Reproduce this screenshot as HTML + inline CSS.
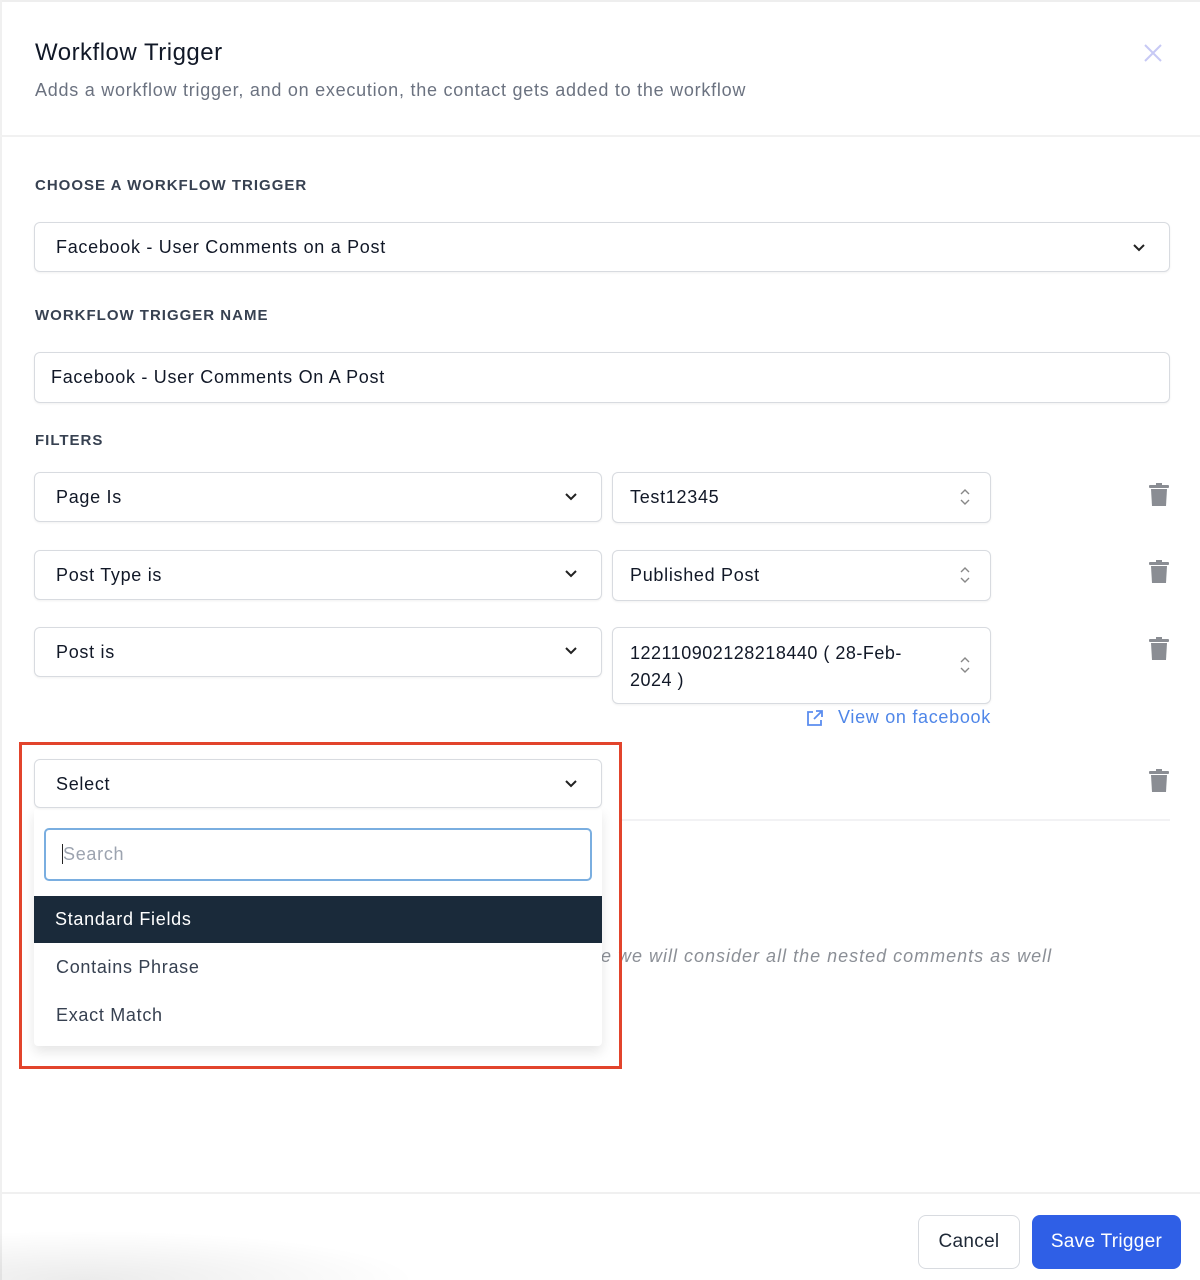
<!DOCTYPE html>
<html><head><meta charset="utf-8"><style>
*{box-sizing:border-box;margin:0;padding:0}
body{width:1200px;height:1280px;background:#fff;font-family:"Liberation Sans",sans-serif;color:#1f2937;position:relative;overflow:hidden;letter-spacing:0.7px}
.abs{position:absolute}
.box{position:absolute;border:1px solid #d8dbe0;border-radius:6px;background:#fff;box-shadow:0 1px 2px rgba(0,0,0,.06);font-size:18px;color:#111827}
.lbl{position:absolute;left:35px;font-size:15px;font-weight:bold;letter-spacing:1px;color:#374151}
.chev{position:absolute;width:16px;height:16px}
.trash{position:absolute;left:1148px;width:22px;height:24px}
</style></head><body>
<div class="abs" style="left:0;top:0;width:1200px;height:2px;background:#eee"></div>
<div class="abs" style="left:0;top:0;width:2px;height:1280px;background:#f0f0f0"></div>
<div class="abs" style="left:35px;top:39px;font-size:24px;color:#111827;letter-spacing:0.5px">Workflow Trigger</div>
<div class="abs" style="left:35px;top:80px;font-size:18px;color:#6b7280;letter-spacing:0.75px">Adds a workflow trigger, and on execution, the contact gets added to the workflow</div>
<svg class="abs" style="left:1143px;top:43px" width="20" height="20" viewBox="0 0 20 20"><path d="M2 2L18 18M18 2L2 18" stroke="#c7c9f5" stroke-width="2"/></svg>
<div class="abs" style="left:0;top:135px;width:1200px;height:2px;background:#f1f1f1"></div>

<div class="lbl" style="top:177px">CHOOSE A WORKFLOW TRIGGER</div>
<div class="box" style="left:34px;top:222px;width:1136px;height:50px;padding:14px 21px">Facebook - User Comments on a Post</div>
<svg class="chev" style="left:1131px;top:240px" viewBox="0 0 16 16"><path d="M3 5l5 5 5-5" fill="none" stroke="#222" stroke-width="2"/></svg>

<div class="lbl" style="top:307px">WORKFLOW TRIGGER NAME</div>
<div class="box" style="left:34px;top:352px;width:1136px;height:51px;padding:14px 16px">Facebook - User Comments On A Post</div>

<div class="lbl" style="top:432px">FILTERS</div>

<div class="box" style="left:34px;top:472px;width:568px;height:50px;padding:14px 21px">Page Is</div>
<svg class="chev" style="left:563px;top:489px" viewBox="0 0 16 16"><path d="M3 5l5 5 5-5" fill="none" stroke="#222" stroke-width="2"/></svg>
<div class="box" style="left:612px;top:472px;width:379px;height:51px;padding:14px 17px">Test12345</div>
<svg class="abs" style="left:959px;top:487px" width="12" height="20" viewBox="0 0 12 20"><path d="M2 7l4-4 4 4M2 13l4 4 4-4" fill="none" stroke="#888" stroke-width="1.4"/></svg>

<div class="box" style="left:34px;top:550px;width:568px;height:50px;padding:14px 21px">Post Type is</div>
<svg class="chev" style="left:563px;top:566px" viewBox="0 0 16 16"><path d="M3 5l5 5 5-5" fill="none" stroke="#222" stroke-width="2"/></svg>
<div class="box" style="left:612px;top:550px;width:379px;height:51px;padding:14px 17px">Published Post</div>
<svg class="abs" style="left:959px;top:565px" width="12" height="20" viewBox="0 0 12 20"><path d="M2 7l4-4 4 4M2 13l4 4 4-4" fill="none" stroke="#888" stroke-width="1.4"/></svg>

<div class="box" style="left:34px;top:627px;width:568px;height:50px;padding:14px 21px">Post is</div>
<svg class="chev" style="left:563px;top:643px" viewBox="0 0 16 16"><path d="M3 5l5 5 5-5" fill="none" stroke="#222" stroke-width="2"/></svg>
<div class="box" style="left:612px;top:627px;width:379px;height:77px;padding:12px 17px;line-height:27px;letter-spacing:0.5px">122110902128218440 ( 28-Feb-<br>2024 )</div>
<svg class="abs" style="left:959px;top:655px" width="12" height="20" viewBox="0 0 12 20"><path d="M2 7l4-4 4 4M2 13l4 4 4-4" fill="none" stroke="#888" stroke-width="1.4"/></svg>
<svg class="abs" style="left:805px;top:709px" width="19" height="19" viewBox="0 0 19 19"><path d="M8 3H3v13h13v-5M11 2h6v6M17 2L9 10" fill="none" stroke="#5b8def" stroke-width="1.8"/></svg>
<div class="abs" style="left:838px;top:707px;font-size:18px;color:#4f86e8">View on facebook</div>

<svg class="trash" style="top:483px" viewBox="0 0 22 24"><rect x="1" y="2" width="20" height="3" rx="1" fill="#8a8d93"/><rect x="8" y="0" width="6" height="3" fill="#8a8d93"/><path d="M3 6h16l-1 17H4z" fill="#8a8d93"/></svg>
<svg class="trash" style="top:560px" viewBox="0 0 22 24"><rect x="1" y="2" width="20" height="3" rx="1" fill="#8a8d93"/><rect x="8" y="0" width="6" height="3" fill="#8a8d93"/><path d="M3 6h16l-1 17H4z" fill="#8a8d93"/></svg>
<svg class="trash" style="top:637px" viewBox="0 0 22 24"><rect x="1" y="2" width="20" height="3" rx="1" fill="#8a8d93"/><rect x="8" y="0" width="6" height="3" fill="#8a8d93"/><path d="M3 6h16l-1 17H4z" fill="#8a8d93"/></svg>
<svg class="trash" style="top:769px" viewBox="0 0 22 24"><rect x="1" y="2" width="20" height="3" rx="1" fill="#8a8d93"/><rect x="8" y="0" width="6" height="3" fill="#8a8d93"/><path d="M3 6h16l-1 17H4z" fill="#8a8d93"/></svg>

<div class="abs" style="left:620px;top:819px;width:550px;height:2px;background:#f2f2f4"></div>
<div class="abs" style="left:601px;top:946px;font-size:18px;font-style:italic;color:#8b8f96;letter-spacing:1px">e we will consider all the nested comments as well</div>

<div class="abs" style="left:34px;top:808px;width:568px;height:238px;background:#fff;border-radius:4px;box-shadow:0 6px 12px rgba(0,0,0,.1)"></div>
<div class="box" style="left:34px;top:759px;width:568px;height:49px;padding:14px 21px">Select</div>
<svg class="chev" style="left:563px;top:776px" viewBox="0 0 16 16"><path d="M3 5l5 5 5-5" fill="none" stroke="#222" stroke-width="2"/></svg>
<div class="abs" style="left:44px;top:828px;width:548px;height:53px;border:2px solid #7aaee0;border-radius:5px;padding:14px 16px;font-size:18px;color:#9ca3af"><span style="border-left:1.5px solid #222"></span>Search</div>
<div class="abs" style="left:34px;top:896px;width:568px;height:47px;background:#1a2a3a;color:#fff;font-size:18px;padding:13px 21px">Standard Fields</div>
<div class="abs" style="left:56px;top:957px;font-size:18px;color:#374151">Contains Phrase</div>
<div class="abs" style="left:56px;top:1005px;font-size:18px;color:#374151">Exact Match</div>

<div class="abs" style="left:19px;top:742px;width:603px;height:327px;border:3px solid #e2442c"></div>

<div class="abs" style="left:0;top:1192px;width:1200px;height:2px;background:#f0f0f0"></div>
<div class="abs" style="left:0;top:1230px;width:420px;height:50px;background:radial-gradient(ellipse at 20% 100%,rgba(0,0,0,.08),rgba(0,0,0,0) 70%)"></div>
<div class="abs" style="left:918px;top:1215px;width:102px;height:54px;border:1px solid #d8dbe0;border-radius:8px;font-size:19px;color:#1f2937;text-align:center;line-height:52px;letter-spacing:0.3px">Cancel</div>
<div class="abs" style="left:1032px;top:1215px;width:149px;height:54px;background:#2f5fe6;border-radius:8px;font-size:19px;color:#fff;text-align:center;line-height:54px;letter-spacing:0.3px">Save Trigger</div>
</body></html>
